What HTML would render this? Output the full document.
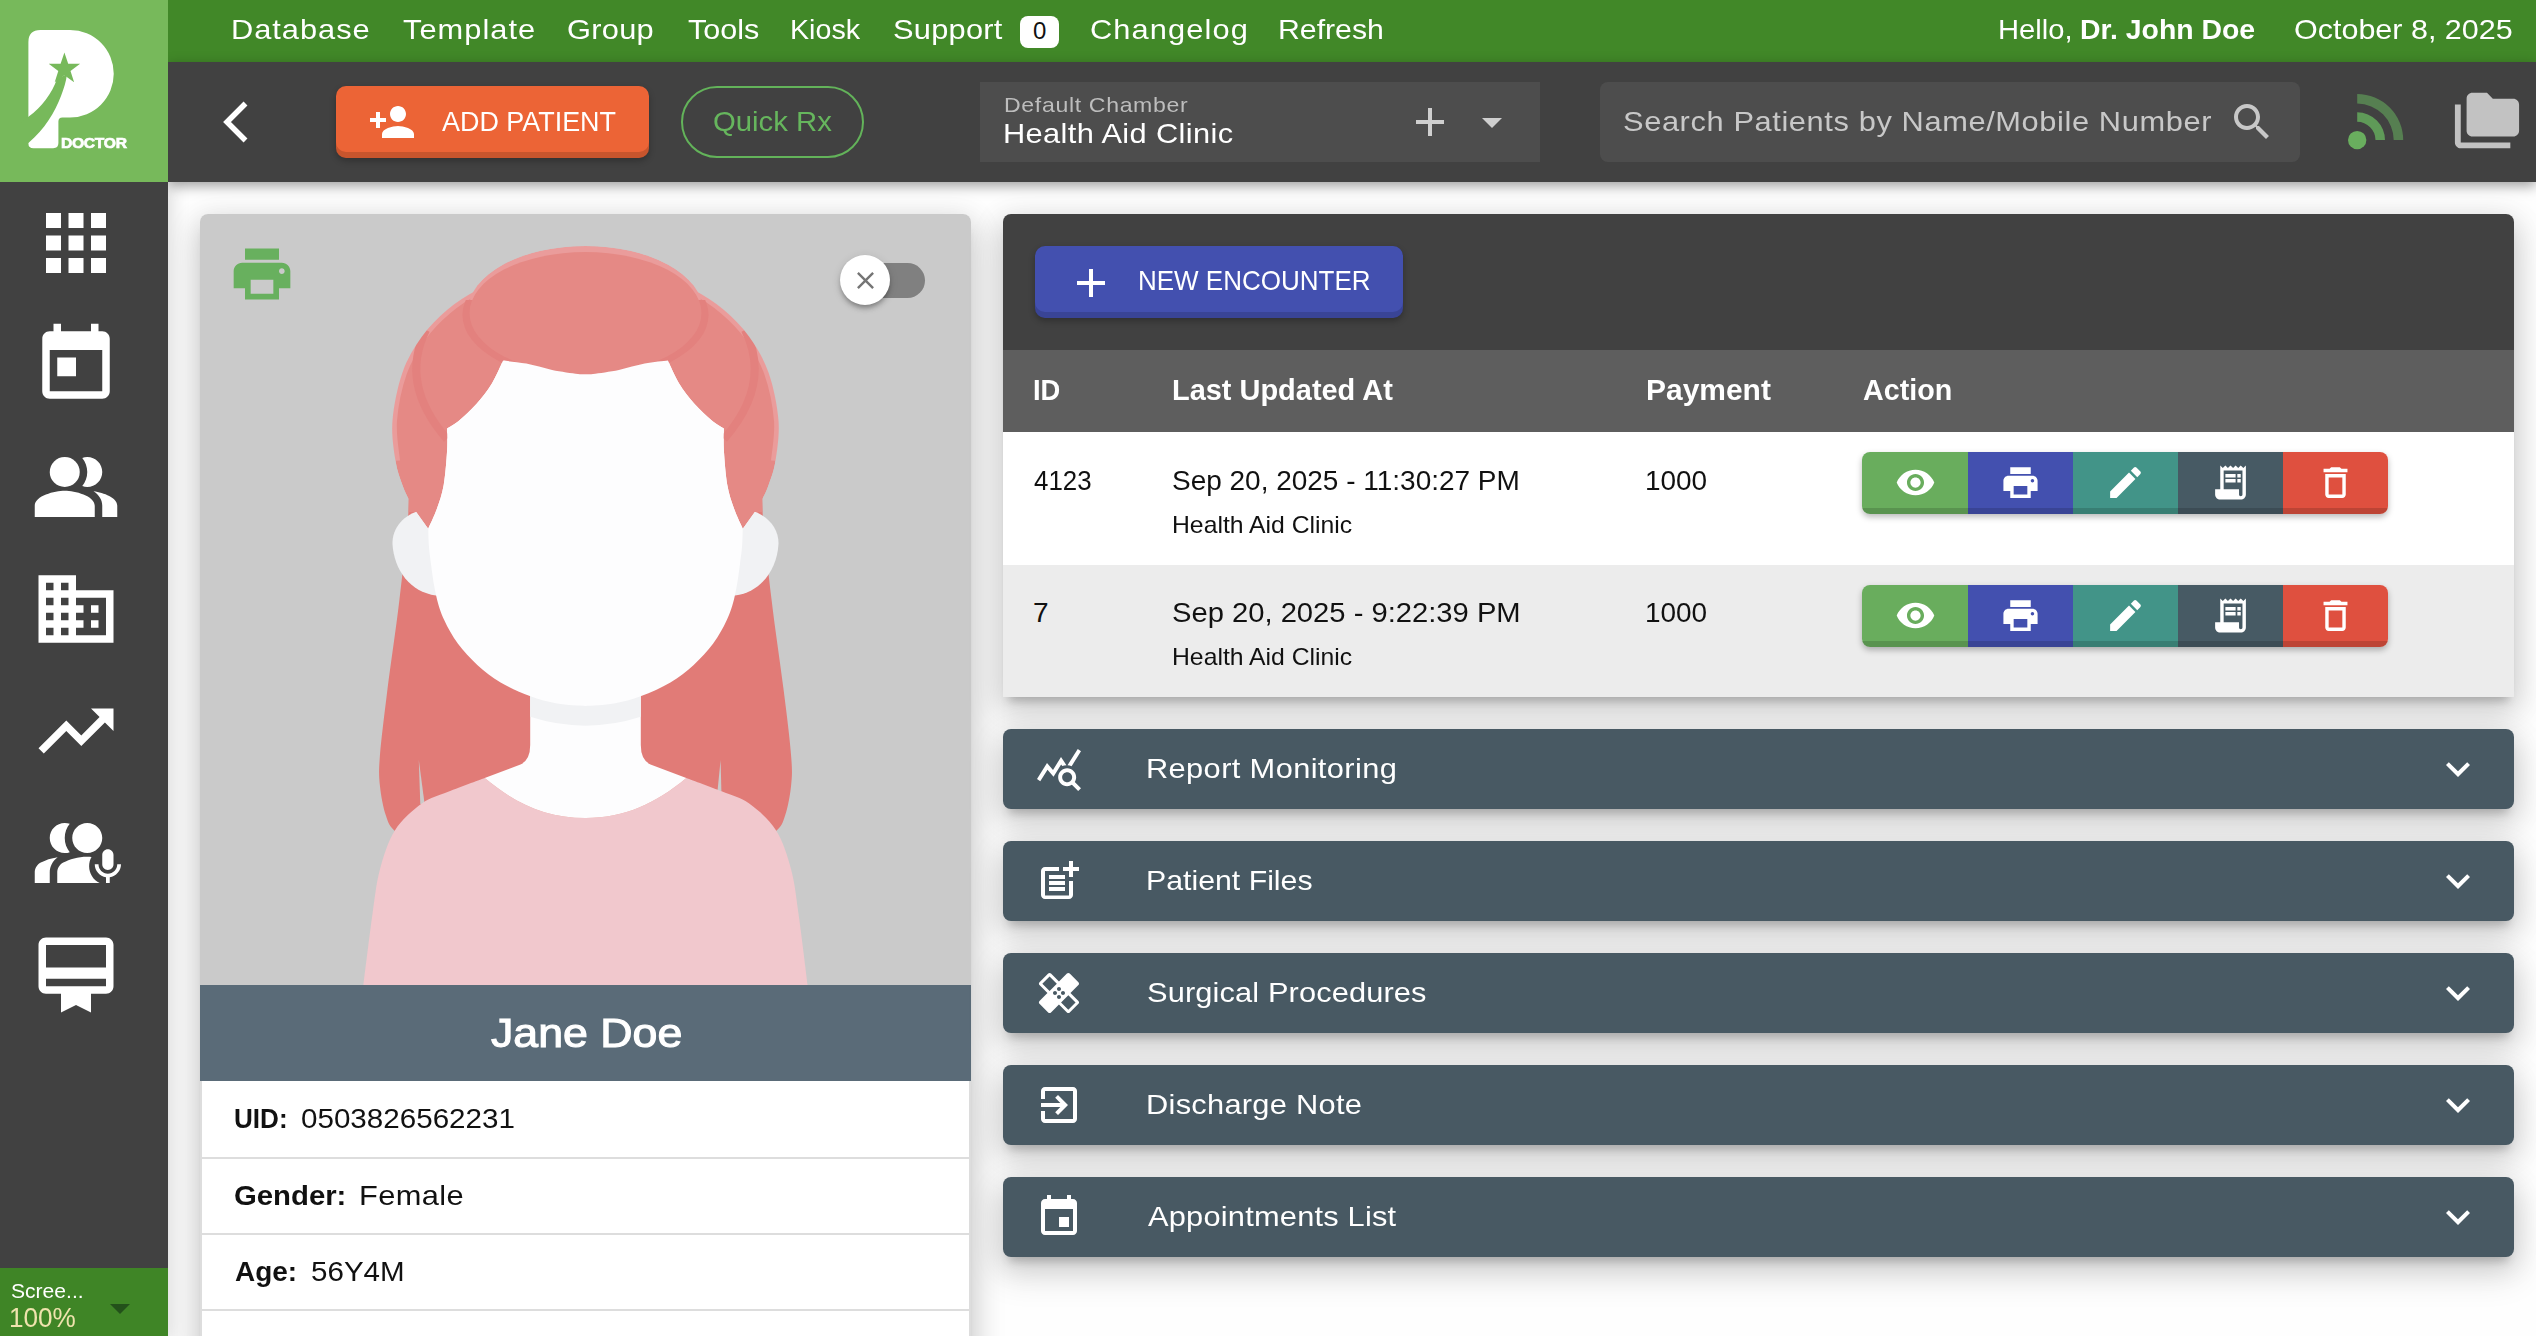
<!DOCTYPE html>
<html><head><meta charset="utf-8"><title>Patient</title>
<style>
*{box-sizing:border-box;margin:0;padding:0}
html,body{width:2536px;height:1336px;overflow:hidden;background:#fefefe;font-family:"Liberation Sans",sans-serif}
#root{position:relative;width:2536px;height:1336px;overflow:hidden}
.b{position:absolute}
.ic{position:absolute;display:block}
.t{position:absolute;white-space:nowrap;line-height:1;transform-origin:0 0}
.avatar{position:absolute;left:0;top:0;display:block}
#side{left:0;top:0;width:168px;height:1336px;background:#414141}
#sidesh{left:0;top:182px;width:168px;height:1160px;box-shadow:3px 0 18px rgba(0,0,0,.15)}
#logo{left:0;top:0;width:168px;height:182px;background:#77b95b}
#nav{left:168px;top:0;width:2368px;height:62px;background:#418828}
#bar{left:168px;top:62px;width:2368px;height:120px;background:#414141;box-shadow:0 4px 12px rgba(0,0,0,.38)}
#scr{left:0;top:1268px;width:168px;height:68px;background:#3f8526}
.btn{border-radius:10px}
.card{box-shadow:0 16px 34px 4px rgba(0,0,0,.12),0 6px 28px 4px rgba(0,0,0,.10),0 10px 10px -6px rgba(0,0,0,.2)}
.acc{left:1003px;width:1511px;height:80px;background:#485963;border-radius:8px}
</style></head>
<body>
<div id="root">
<div class="b" id="sidesh"></div>
<div class="b" id="nav"></div>
<div class="b" id="bar"></div>
<div class="b card" style="left:200px;top:214px;width:771px;height:1200px;border-radius:8px;overflow:hidden;background:#fff"><div class="b" style="left:0;top:0;width:771px;height:771px;background:#cacaca"></div><svg class="avatar" viewBox="0 0 771 771" width="771" height="771"><path d="M208.4,240.0 C208.4,249.8 209.9,274.2 208.4,298.5 C206.9,322.8 202.9,356.4 199.4,386.0 C195.9,415.6 190.7,449.9 187.4,475.8 C184.2,501.8 181.2,525.7 179.9,541.7 C178.7,557.7 178.9,561.6 179.9,571.6 C180.9,581.6 183.2,593.9 185.9,601.6 C188.6,609.3 188.7,611.6 196.0,618.0 C203.3,624.4 224.3,636.3 230.0,640.0 L541.0,640.0 C546.7,636.3 567.6,624.4 575.0,618.0 C582.4,611.6 582.4,609.3 585.1,601.6 C587.8,593.9 590.1,581.6 591.1,571.6 C592.1,561.6 592.4,557.7 591.1,541.7 C589.9,525.7 586.9,501.8 583.6,475.8 C580.4,449.9 575.1,415.6 571.6,386.0 C568.1,356.4 564.1,322.8 562.6,298.5 C561.1,274.2 562.6,249.8 562.6,240.0 Z" fill="#e17b77"/><path d="M218.8,546 L220.3,590 L224.6,590 Z" fill="#cacaca"/><path d="M520.6,546 L517.4,578 L521.4,578 Z" fill="#cacaca"/><path d="M284.7,564.1 C278.7,566.4 259.3,573.4 248.8,577.6 C238.3,581.9 230.8,583.1 221.8,589.6 C212.8,596.1 201.9,605.5 194.9,616.5 C187.9,627.5 183.7,641.5 179.9,655.5 C176.2,669.5 175.2,681.1 172.4,700.4 C169.7,719.6 164.9,759.2 163.4,771.0 L607.6,771.0 C606.1,759.2 601.4,719.6 598.6,700.4 C595.9,681.1 594.9,669.5 591.1,655.5 C587.4,641.5 583.1,627.5 576.1,616.5 C569.1,605.5 558.2,596.1 549.2,589.6 C540.2,583.1 532.7,581.9 522.2,577.6 C511.7,573.4 492.3,566.4 486.3,564.1 C455.4,589.6 425,604 385.5,604 C346,604 315.6,589.6 284.7,564.1 Z" fill="#f1c8cd"/><path d="M330.2,460 V531 Q330.2,546 320.5,550.5 L284.7,564.1 C315.6,589.6 346,604 385.5,604 C425,604 455.4,589.6 486.3,564.1 L450.5,550.5 Q440.8,546 440.8,531 V460 Z" fill="#fdfdfe"/><path d="M330.2,470 V502.8 Q385.5,520.6 440.8,502.8 V470 Z" fill="#f1f2f4"/><path d="M222,296 C204,300 192,314 192.5,330 C194,356 210,378 236,381.5 L250,381 L250,296 Z" fill="#f1f2f4"/><path d="M222,296 C204,300 192,314 192.5,330 C194,356 210,378 236,381.5 L250,381 L250,296 Z" fill="#f1f2f4" transform="translate(771.0,0) scale(-1,1)"/><path d="M300.0,100.0 C291.7,108.3 261.7,128.3 250.0,150.0 C238.3,171.7 233.6,202.6 230.0,230.0 C226.4,257.4 228.1,294.6 228.3,314.6 C228.5,334.6 229.7,338.6 231.0,350.0 C232.3,361.4 234.2,373.4 236.4,382.8 C238.6,392.2 240.6,398.3 244.2,406.1 C247.8,413.9 252.3,422.0 257.8,429.5 C263.3,437.0 270.2,444.4 277.3,450.9 C284.4,457.4 291.9,463.2 300.6,468.4 C309.4,473.6 320.4,478.5 329.8,482.0 C339.2,485.5 347.7,487.8 357.0,489.5 C366.3,491.2 380.8,491.6 385.5,492.0 C390.2,491.6 404.7,491.2 414.0,489.5 C423.3,487.8 431.8,485.5 441.2,482.0 C450.6,478.5 461.6,473.6 470.4,468.4 C479.1,463.2 486.6,457.4 493.7,450.9 C500.8,444.4 507.7,437.0 513.2,429.5 C518.7,422.0 523.2,413.9 526.8,406.1 C530.4,398.3 532.4,392.2 534.6,382.8 C536.8,373.4 538.6,361.4 540.0,350.0 C541.4,338.6 542.5,334.6 542.7,314.6 C542.9,294.6 544.6,257.4 541.0,230.0 C537.4,202.6 532.7,171.7 521.0,150.0 C509.3,128.3 479.3,108.3 471.0,100.0 Z" fill="#fdfdfe"/><clipPath id="c130"><rect x="0" y="0" width="771" height="135"/></clipPath><clipPath id="hc"><path d="M385.5,60.0 C377.9,60.0 353.4,59.0 340.0,60.0 C326.6,61.0 315.5,63.3 305.0,66.0 C294.5,68.7 286.7,71.0 277.0,76.0 C267.3,81.0 256.2,88.2 247.0,96.0 C237.8,103.8 229.2,112.3 221.8,122.8 C214.4,133.2 207.3,144.7 202.4,158.7 C197.5,172.7 193.7,191.9 192.5,206.6 C191.3,221.3 193.8,236.1 195.5,246.8 C197.2,257.5 200.2,264.6 202.4,270.9 C204.6,277.2 207.4,282.4 208.4,284.7 L208.4,298.5 L216.2,298.1 L228.2,314.8 C229.6,311.5 234.2,302.3 236.8,295.0 C239.4,287.7 242.0,280.6 243.7,270.9 C245.4,261.1 246.5,245.9 247.1,236.5 C247.7,227.1 247.1,218.2 247.1,214.5 C249.1,213.2 254.3,210.5 259.2,206.4 C264.1,202.3 270.9,196.2 276.4,190.0 C281.8,183.8 287.4,176.6 291.9,169.4 C296.3,162.2 301.2,150.4 303.1,146.6 C307.0,147.1 318.1,148.0 326.3,149.6 C334.5,151.2 343.5,154.2 352.1,155.9 C360.7,157.6 372.4,159.2 378.0,159.9 C383.6,160.6 384.2,160.2 385.5,160.3 C386.8,160.2 387.4,160.6 393.0,159.9 C398.6,159.2 410.3,157.6 418.9,155.9 C427.5,154.2 436.5,151.2 444.7,149.6 C452.9,148.0 464.0,147.1 467.9,146.6 C469.8,150.4 474.7,162.2 479.1,169.4 C483.6,176.6 489.2,183.8 494.6,190.0 C500.1,196.2 506.9,202.3 511.8,206.4 C516.7,210.5 521.9,213.2 523.9,214.5 C523.9,218.2 523.3,227.1 523.9,236.5 C524.5,245.9 525.6,261.1 527.3,270.9 C529.0,280.6 531.6,287.7 534.2,295.0 C536.8,302.3 541.4,311.5 542.8,314.8 L554.8,298.1 L562.6,298.5 L562.6,284.7 C563.6,282.4 566.5,277.2 568.6,270.9 C570.8,264.6 573.9,257.5 575.5,246.8 C577.1,236.1 579.6,221.3 578.5,206.6 C577.4,191.9 573.5,172.7 568.6,158.7 C563.7,144.7 556.6,133.2 549.2,122.8 C541.8,112.3 533.2,103.8 524.0,96.0 C514.8,88.2 503.7,81.0 494.0,76.0 C484.3,71.0 476.5,68.7 466.0,66.0 C455.5,63.3 444.4,61.0 431.0,60.0 C417.6,59.0 393.1,60.0 385.5,60.0 Z"/><ellipse cx="385.5" cy="96" rx="117" ry="64" clip-path="url(#c130)"/></clipPath><clipPath id="ctop"><rect x="0" y="0" width="771" height="100"/></clipPath><clipPath id="cbot"><rect x="0" y="86" width="771" height="100"/></clipPath><g clip-path="url(#hc)"><path d="M385.5,60.0 C377.9,60.0 353.4,59.0 340.0,60.0 C326.6,61.0 315.5,63.3 305.0,66.0 C294.5,68.7 286.7,71.0 277.0,76.0 C267.3,81.0 256.2,88.2 247.0,96.0 C237.8,103.8 229.2,112.3 221.8,122.8 C214.4,133.2 207.3,144.7 202.4,158.7 C197.5,172.7 193.7,191.9 192.5,206.6 C191.3,221.3 193.8,236.1 195.5,246.8 C197.2,257.5 200.2,264.6 202.4,270.9 C204.6,277.2 207.4,282.4 208.4,284.7 L208.4,298.5 L216.2,298.1 L228.2,314.8 C229.6,311.5 234.2,302.3 236.8,295.0 C239.4,287.7 242.0,280.6 243.7,270.9 C245.4,261.1 246.5,245.9 247.1,236.5 C247.7,227.1 247.1,218.2 247.1,214.5 C249.1,213.2 254.3,210.5 259.2,206.4 C264.1,202.3 270.9,196.2 276.4,190.0 C281.8,183.8 287.4,176.6 291.9,169.4 C296.3,162.2 301.2,150.4 303.1,146.6 C307.0,147.1 318.1,148.0 326.3,149.6 C334.5,151.2 343.5,154.2 352.1,155.9 C360.7,157.6 372.4,159.2 378.0,159.9 C383.6,160.6 384.2,160.2 385.5,160.3 C386.8,160.2 387.4,160.6 393.0,159.9 C398.6,159.2 410.3,157.6 418.9,155.9 C427.5,154.2 436.5,151.2 444.7,149.6 C452.9,148.0 464.0,147.1 467.9,146.6 C469.8,150.4 474.7,162.2 479.1,169.4 C483.6,176.6 489.2,183.8 494.6,190.0 C500.1,196.2 506.9,202.3 511.8,206.4 C516.7,210.5 521.9,213.2 523.9,214.5 C523.9,218.2 523.3,227.1 523.9,236.5 C524.5,245.9 525.6,261.1 527.3,270.9 C529.0,280.6 531.6,287.7 534.2,295.0 C536.8,302.3 541.4,311.5 542.8,314.8 L554.8,298.1 L562.6,298.5 L562.6,284.7 C563.6,282.4 566.5,277.2 568.6,270.9 C570.8,264.6 573.9,257.5 575.5,246.8 C577.1,236.1 579.6,221.3 578.5,206.6 C577.4,191.9 573.5,172.7 568.6,158.7 C563.7,144.7 556.6,133.2 549.2,122.8 C541.8,112.3 533.2,103.8 524.0,96.0 C514.8,88.2 503.7,81.0 494.0,76.0 C484.3,71.0 476.5,68.7 466.0,66.0 C455.5,63.3 444.4,61.0 431.0,60.0 C417.6,59.0 393.1,60.0 385.5,60.0 Z" fill="#e58985"/><path d="M305.0,66.0 C300.3,67.7 286.7,71.0 277.0,76.0 C267.3,81.0 256.2,88.2 247.0,96.0 C237.8,103.8 229.2,112.3 221.8,122.8 C214.4,133.2 207.3,144.7 202.4,158.7 C197.5,172.7 193.7,191.9 192.5,206.6 C191.3,221.3 195.0,240.1 195.5,246.8" fill="none" stroke="#ea9c9b" stroke-width="9"/><path d="M305.0,66.0 C300.3,67.7 286.7,71.0 277.0,76.0 C267.3,81.0 256.2,88.2 247.0,96.0 C237.8,103.8 229.2,112.3 221.8,122.8 C214.4,133.2 207.3,144.7 202.4,158.7 C197.5,172.7 193.7,191.9 192.5,206.6 C191.3,221.3 195.0,240.1 195.5,246.8" fill="none" stroke="#ea9c9b" stroke-width="9" transform="translate(771.0,0) scale(-1,1)"/><path d="M226,116 C209,150 213,186 247,225" fill="none" stroke="#e3817e" stroke-width="8"/><path d="M226,116 C209,150 213,186 247,225" fill="none" stroke="#e3817e" stroke-width="8" transform="translate(771.0,0) scale(-1,1)"/><g clip-path="url(#ctop)"><ellipse cx="385.5" cy="96" rx="117" ry="64" fill="#ea9c9b"/></g><g clip-path="url(#cbot)"><ellipse cx="385.5" cy="101" rx="123" ry="65" fill="#e3817e"/></g><ellipse cx="385.5" cy="99" rx="116" ry="61" fill="#e58985"/></g></svg><div class="b" style="left:0;top:771px;width:771px;height:96px;background:#5a6b78"></div><div class="b" style="left:0;top:867px;width:771px;height:400px;border:2px solid #ddd;border-top:0"></div><div class="b" style="left:2px;top:943px;width:767px;height:2px;background:#ddd"></div><div class="b" style="left:2px;top:1019px;width:767px;height:2px;background:#ddd"></div><div class="b" style="left:2px;top:1095px;width:767px;height:2px;background:#ddd"></div></div>
<svg class="ic" style="left:227.5px;top:240px;width:68px;height:68px" viewBox="0 0 24 24" fill="#68b05e" ><path d="M19 8H5c-1.660 0-3 1.340-3 3v6h4v4h12v-4h4v-6c0-1.660-1.340-3-3-3zm-3 11H8v-5h8v5zm3-7c-.55 0-1-.45-1-1s.45-1 1-1 1 .45 1 1-.45 1-1 1zm-1-9H6v4h12V3z"/></svg>
<div class="b" style="left:853px;top:263px;width:72px;height:35px;border-radius:18px;background:#808080"></div>
<div class="b" style="left:840px;top:255px;width:50px;height:50px;border-radius:25px;background:#fff;box-shadow:0 4px 4px -2px rgba(0,0,0,.2),0 4px 5px rgba(0,0,0,.14),0 2px 10px rgba(0,0,0,.12)"></div>
<svg class="ic" style="left:850.5px;top:265.5px;width:29px;height:29px" viewBox="0 0 24 24" fill="#757575" ><path d="M19 6.410L17.590 5 12 10.590 6.410 5 5 6.410 10.590 12 5 17.590 6.410 19 12 13.410 17.590 19 19 17.590 13.410 12z"/></svg>
<div class="b card" style="left:1003px;top:214px;width:1511px;height:483px;border-radius:8px 8px 0 0;overflow:hidden;background:#fff"><div class="b" style="left:0;top:0;width:1511px;height:136px;background:#414141"></div><div class="b" style="left:0;top:136px;width:1511px;height:82px;background:#5e5e5e"></div><div class="b" style="left:0;top:218px;width:1511px;height:133px;background:#fff"></div><div class="b" style="left:0;top:351px;width:1511px;height:132px;background:#ececec"></div></div>
<div class="b btn" style="left:1035px;top:246px;width:368px;height:72px;background:#4350af;box-shadow:inset 0 -6px 0 rgba(0,0,0,.14),0 3px 6px rgba(0,0,0,.28)"></div>
<svg class="ic" style="left:1067px;top:258.5px;width:48px;height:48px" viewBox="0 0 24 24" fill="#fff" ><path d="M19 13h-6v6h-2v-6H5v-2h6V5h2v6h6v2z"/></svg>
<div class="b" style="left:1862px;top:452px;width:526px;height:62px;border-radius:8px;overflow:hidden;box-shadow:0 3px 6px rgba(0,0,0,.28)"><div class="b" style="left:0px;top:0;width:106px;height:62px;background:#69ad5d;box-shadow:inset 0 -6px 0 rgba(0,0,0,.15)"></div><div class="b" style="left:106px;top:0;width:105px;height:62px;background:#4350af;box-shadow:inset 0 -6px 0 rgba(0,0,0,.15)"></div><div class="b" style="left:211px;top:0;width:105px;height:62px;background:#429488;box-shadow:inset 0 -6px 0 rgba(0,0,0,.15)"></div><div class="b" style="left:316px;top:0;width:105px;height:62px;background:#475a64;box-shadow:inset 0 -6px 0 rgba(0,0,0,.15)"></div><div class="b" style="left:421px;top:0;width:105px;height:62px;background:#df503f;box-shadow:inset 0 -6px 0 rgba(0,0,0,.15)"></div></div>
<svg class="ic" style="left:1894.5px;top:461.5px;width:41px;height:41px" viewBox="0 0 24 24" fill="#fff" ><path d="M12 4.500C7 4.500 2.730 7.610 1 12c1.730 4.390 6 7.500 11 7.500s9.270-3.110 11-7.500c-1.730-4.390-6-7.500-11-7.500zM12 17c-2.760 0-5-2.240-5-5s2.240-5 5-5 5 2.240 5 5-2.240 5-5 5zm0-8c-1.660 0-3 1.340-3 3s1.340 3 3 3 3-1.340 3-3-1.340-3-3-3z"/></svg>
<svg class="ic" style="left:2000.0px;top:461.5px;width:41px;height:41px" viewBox="0 0 24 24" fill="#fff" ><path d="M19 8H5c-1.660 0-3 1.340-3 3v6h4v4h12v-4h4v-6c0-1.660-1.340-3-3-3zm-3 11H8v-5h8v5zm3-7c-.55 0-1-.45-1-1s.45-1 1-1 1 .45 1 1-.45 1-1 1zm-1-9H6v4h12V3z"/></svg>
<svg class="ic" style="left:2105.0px;top:461.5px;width:41px;height:41px" viewBox="0 0 24 24" fill="#fff" ><path d="M3 17.250V21h3.750L17.810 9.940l-3.750-3.750L3 17.250zM20.710 7.040c.39-.39.39-1.020 0-1.410l-2.340-2.340c-.39-.39-1.020-.39-1.410 0l-1.830 1.830 3.750 3.750 1.830-1.830z"/></svg>
<svg class="ic" style="left:2210.0px;top:461.5px;width:41px;height:41px" viewBox="0 0 24 24" fill="#fff" ><path d="M19.500 3.500L18 2l-1.500 1.500L15 2l-1.500 1.500L12 2l-1.500 1.500L9 2 7.500 3.500 6 2v14H3v3c0 1.660 1.340 3 3 3h12c1.660 0 3-1.340 3-3V2l-1.500 1.500zM19 19c0 .55-.45 1-1 1s-1-.45-1-1v-3H8V5h11v14z"/><path d="M9 7h6v2H9zM16 7h2v2h-2zM9 10h6v2H9zM16 10h2v2h-2z"/></svg>
<svg class="ic" style="left:2315.0px;top:461.5px;width:41px;height:41px" viewBox="0 0 24 24" fill="#fff" ><path d="M6 19c0 1.100.9 2 2 2h8c1.100 0 2-.9 2-2V7H6v12zM8 9h8v10H8V9zm7.500-5l-1-1h-5l-1 1H5v2h14V4z"/></svg>
<div class="b" style="left:1862px;top:585px;width:526px;height:62px;border-radius:8px;overflow:hidden;box-shadow:0 3px 6px rgba(0,0,0,.28)"><div class="b" style="left:0px;top:0;width:106px;height:62px;background:#69ad5d;box-shadow:inset 0 -6px 0 rgba(0,0,0,.15)"></div><div class="b" style="left:106px;top:0;width:105px;height:62px;background:#4350af;box-shadow:inset 0 -6px 0 rgba(0,0,0,.15)"></div><div class="b" style="left:211px;top:0;width:105px;height:62px;background:#429488;box-shadow:inset 0 -6px 0 rgba(0,0,0,.15)"></div><div class="b" style="left:316px;top:0;width:105px;height:62px;background:#475a64;box-shadow:inset 0 -6px 0 rgba(0,0,0,.15)"></div><div class="b" style="left:421px;top:0;width:105px;height:62px;background:#df503f;box-shadow:inset 0 -6px 0 rgba(0,0,0,.15)"></div></div>
<svg class="ic" style="left:1894.5px;top:594.5px;width:41px;height:41px" viewBox="0 0 24 24" fill="#fff" ><path d="M12 4.500C7 4.500 2.730 7.610 1 12c1.730 4.390 6 7.500 11 7.500s9.270-3.110 11-7.500c-1.730-4.390-6-7.500-11-7.500zM12 17c-2.760 0-5-2.240-5-5s2.240-5 5-5 5 2.240 5 5-2.240 5-5 5zm0-8c-1.660 0-3 1.340-3 3s1.340 3 3 3 3-1.340 3-3-1.340-3-3-3z"/></svg>
<svg class="ic" style="left:2000.0px;top:594.5px;width:41px;height:41px" viewBox="0 0 24 24" fill="#fff" ><path d="M19 8H5c-1.660 0-3 1.340-3 3v6h4v4h12v-4h4v-6c0-1.660-1.340-3-3-3zm-3 11H8v-5h8v5zm3-7c-.55 0-1-.45-1-1s.45-1 1-1 1 .45 1 1-.45 1-1 1zm-1-9H6v4h12V3z"/></svg>
<svg class="ic" style="left:2105.0px;top:594.5px;width:41px;height:41px" viewBox="0 0 24 24" fill="#fff" ><path d="M3 17.250V21h3.750L17.810 9.940l-3.750-3.750L3 17.250zM20.710 7.040c.39-.39.39-1.020 0-1.410l-2.340-2.340c-.39-.39-1.020-.39-1.410 0l-1.830 1.830 3.750 3.750 1.830-1.830z"/></svg>
<svg class="ic" style="left:2210.0px;top:594.5px;width:41px;height:41px" viewBox="0 0 24 24" fill="#fff" ><path d="M19.500 3.500L18 2l-1.500 1.500L15 2l-1.500 1.500L12 2l-1.500 1.500L9 2 7.500 3.500 6 2v14H3v3c0 1.660 1.340 3 3 3h12c1.660 0 3-1.340 3-3V2l-1.500 1.500zM19 19c0 .55-.45 1-1 1s-1-.45-1-1v-3H8V5h11v14z"/><path d="M9 7h6v2H9zM16 7h2v2h-2zM9 10h6v2H9zM16 10h2v2h-2z"/></svg>
<svg class="ic" style="left:2315.0px;top:594.5px;width:41px;height:41px" viewBox="0 0 24 24" fill="#fff" ><path d="M6 19c0 1.100.9 2 2 2h8c1.100 0 2-.9 2-2V7H6v12zM8 9h8v10H8V9zm7.500-5l-1-1h-5l-1 1H5v2h14V4z"/></svg>
<div class="b acc card" style="top:729px"></div>
<svg class="ic" style="left:1035px;top:745px;width:48px;height:48px" viewBox="0 0 24 24" fill="#fff" ><path d="M19.880 18.470c.440-.700.700-1.510.700-2.390 0-2.490-2.010-4.500-4.500-4.500s-4.500 2.010-4.500 4.500 2.010 4.500 4.490 4.500c.880 0 1.700-.260 2.390-.700L21.580 23 23 21.580l-3.120-3.110zm-3.800.110c-1.380 0-2.500-1.120-2.500-2.500s1.120-2.500 2.500-2.500 2.500 1.120 2.500 2.500-1.120 2.500-2.500 2.500zm-.360-8.500c-.740.020-1.450.180-2.100.450l-.55-.83-3.800 6.180-3.010-3.520-3.630 5.810L1 17l5-8 3 3.500L13 6l2.720 4.080zm2.590.5c-.640-.280-1.330-.450-2.050-.490L21.380 2 23 3.180l-4.690 7.400z"/></svg>
<svg class="ic" style="left:2434px;top:745px;width:48px;height:48px" viewBox="0 0 24 24" fill="#fff" ><path d="M16.590 8.590L12 13.170 7.410 8.590 6 10l6 6 6-6z"/></svg>
<div class="b acc card" style="top:841px"></div>
<svg class="ic" style="left:1035px;top:857px;width:48px;height:48px" viewBox="0 0 24 24" fill="#fff" ><path d="M17 19.220H5V7h7V5H5c-1.100 0-2 .9-2 2v12c0 1.100.9 2 2 2h12c1.100 0 2-.9 2-2v-7h-2v7.220z"/><path d="M19 2h-2v3h-3c.01.010 0 2 0 2h3v2.990c.01.010 2 0 2 0V7h3V5h-3V2zM7 9h8v2H7zM7 12v2h8v-2h-3zM7 15h8v2H7z"/></svg>
<svg class="ic" style="left:2434px;top:857px;width:48px;height:48px" viewBox="0 0 24 24" fill="#fff" ><path d="M16.590 8.590L12 13.170 7.410 8.590 6 10l6 6 6-6z"/></svg>
<div class="b acc card" style="top:953px"></div>
<svg class="ic" style="left:1035px;top:969px;width:48px;height:48px" viewBox="0 0 24 24" fill="#fff" ><path d="M17.730 12.020l3.980-3.980c.39-.39.39-1.020 0-1.410l-4.340-4.340c-.39-.39-1.020-.39-1.410 0l-3.980 3.980L8 2.290C7.800 2.100 7.550 2 7.290 2c-.25 0-.51.100-.7.290L2.250 6.630c-.39.39-.39 1.020 0 1.410l3.980 3.980L2.250 16c-.39.39-.39 1.020 0 1.410l4.340 4.340c.39.39 1.020.39 1.410 0l3.980-3.980 3.980 3.980c.2.200.45.290.71.290.26 0 .51-.1.710-.29l4.340-4.340c.39-.39.39-1.020 0-1.410l-3.990-3.980zM12 9c.55 0 1 .45 1 1s-.45 1-1 1-1-.45-1-1 .45-1 1-1zm-4.710 1.960L3.660 7.340l3.630-3.630 3.620 3.620-3.620 3.630zM10 13c-.55 0-1-.45-1-1s.45-1 1-1 1 .45 1 1-.45 1-1 1zm2 2c-.55 0-1-.45-1-1s.45-1 1-1 1 .45 1 1-.45 1-1 1zm2-4c.55 0 1 .45 1 1s-.45 1-1 1-1-.45-1-1 .45-1 1-1zm2.660 9.340l-3.630-3.620 3.630-3.630 3.620 3.620-3.620 3.630z"/></svg>
<svg class="ic" style="left:2434px;top:969px;width:48px;height:48px" viewBox="0 0 24 24" fill="#fff" ><path d="M16.590 8.590L12 13.170 7.410 8.590 6 10l6 6 6-6z"/></svg>
<div class="b acc card" style="top:1065px"></div>
<svg class="ic" style="left:1035px;top:1081px;width:48px;height:48px" viewBox="0 0 24 24" fill="#fff" ><path d="M10.090 15.590L11.500 17l5-5-5-5-1.410 1.410L12.670 11H3v2h9.670l-2.580 2.590zM19 3H5c-1.110 0-2 .9-2 2v4h2V5h14v14H5v-4H3v4c0 1.100.89 2 2 2h14c1.100 0 2-.9 2-2V5c0-1.100-.9-2-2-2z"/></svg>
<svg class="ic" style="left:2434px;top:1081px;width:48px;height:48px" viewBox="0 0 24 24" fill="#fff" ><path d="M16.590 8.590L12 13.170 7.410 8.590 6 10l6 6 6-6z"/></svg>
<div class="b acc card" style="top:1177px"></div>
<svg class="ic" style="left:1035px;top:1193px;width:48px;height:48px" viewBox="0 0 24 24" fill="#fff" ><path d="M17 12h-5v5h5v-5zM16 1v2H8V1H6v2H5c-1.110 0-1.990.9-1.990 2L3 19c0 1.100.89 2 2 2h14c1.100 0 2-.9 2-2V5c0-1.100-.9-2-2-2h-1V1h-2zm3 18H5V8h14v11z"/></svg>
<svg class="ic" style="left:2434px;top:1193px;width:48px;height:48px" viewBox="0 0 24 24" fill="#fff" ><path d="M16.590 8.590L12 13.170 7.410 8.590 6 10l6 6 6-6z"/></svg>
<div class="b" id="side"></div>
<div class="b" id="logo"></div>
<svg class="ic" style="left:0;top:0;width:168px;height:182px" viewBox="0 0 168 182"><path d="M28.4,42 Q28.4,30 40.4,30 H70 A43.75,43.75 0 0 1 70,117.5 H62.4 Q58.4,117.5 58.4,121.5 V143 Q58.4,148.2 53.2,148.2 H33.5 Q28.4,148.2 28.4,143.5 Z" fill="#fff"/><path d="M57,79 C52,93 42,107 28.4,116.8 L20,123 L20,150 L29.2,142.2 C44,130 55,112 61,96 C64,88 66,82 67,74 Z" fill="#77b95b"/><polygon points="64.4,52.4 68.2,63.7 80.1,63.8 70.5,70.9 74.1,82.2 64.4,75.3 54.7,82.2 58.3,70.9 48.7,63.8 60.6,63.7" fill="#77b95b"/></svg>
<div class="t" id="doctor" style="left:61.2px;top:135.4px;font-size:15.2px;font-weight:700;color:#fff;letter-spacing:-0.3px;-webkit-text-stroke:0.7px #fff;transform:scaleX(1.03)">DOCTOR</div>
<svg class="ic" style="left:31px;top:198px;width:90px;height:90px" viewBox="0 0 24 24" fill="#fff" ><path d="M4 8h4V4H4v4zm6 12h4v-4h-4v4zm-6 0h4v-4H4v4zm0-6h4v-4H4v4zm6 0h4v-4h-4v4zm6-10v4h4V4h-4zm-6 4h4V4h-4v4zm6 6h4v-4h-4v4zm0 6h4v-4h-4v4z"/></svg>
<svg class="ic" style="left:31px;top:320px;width:90px;height:90px" viewBox="0 0 24 24" fill="#fff" ><path d="M19 3h-1V1h-2v2H8V1H6v2H5c-1.11 0-1.99.9-1.99 2L3 19c0 1.1.89 2 2 2h14c1.1 0 2-.9 2-2V5c0-1.1-.9-2-2-2zm0 16H5V8h14v11zM7 10h5v5H7z"/></svg>
<svg class="ic" style="left:31px;top:442px;width:90px;height:90px" viewBox="0 0 24 24" fill="#fff" ><path d="M16.67 13.13C18.04 14.06 19 15.32 19 17v3h4v-3c0-2.18-3.57-3.47-6.33-3.87z"/><circle cx="9" cy="8" r="4"/><path d="M15 12c2.21 0 4-1.79 4-4s-1.79-4-4-4c-.47 0-.91.1-1.33.24C14.5 5.27 15 6.58 15 8s-.5 2.73-1.33 3.76c.42.14.86.24 1.33.24zM9 13c-2.67 0-8 1.34-8 4v3h16v-3c0-2.66-5.33-4-8-4z"/></svg>
<svg class="ic" style="left:31px;top:564px;width:90px;height:90px" viewBox="0 0 24 24" fill="#fff" ><path d="M12 7V3H2v18h20V7H12zM6 19H4v-2h2v2zm0-4H4v-2h2v2zm0-4H4V9h2v2zm0-4H4V5h2v2zm4 12H8v-2h2v2zm0-4H8v-2h2v2zm0-4H8V9h2v2zm0-4H8V5h2v2zm10 12h-8v-2h2v-2h-2v-2h2v-2h-2V9h8v10zm-2-8h-2v2h2v-2zm0 4h-2v2h2v-2z"/></svg>
<svg class="ic" style="left:31px;top:686px;width:90px;height:90px" viewBox="0 0 24 24" fill="#fff" ><path d="M16 6l2.29 2.29-4.88 4.88-4-4L2 16.59 3.41 18l6-6 4 4 6.3-6.29L22 12V6z"/></svg>
<svg class="ic" style="left:31px;top:808px;width:90px;height:90px" viewBox="0 0 24 24" fill="#fff" ><path d="M20.5 16.5c-.83 0-1.5-.67-1.5-1.5v-2.5c0-.83.67-1.5 1.500-1.500s1.500.67 1.500 1.500V15c0 .83-.67 1.500-1.500 1.500zM20 20h1v-1.540c1.690-.240 3-1.700 3-3.460h-1c0 1.380-1.120 2.500-2.500 2.500S18 16.380 18 15h-1c0 1.760 1.310 3.220 3 3.460V20zM9 12c-2.210 0-4-1.790-4-4s1.790-4 4-4c.470 0 .920.080 1.340.230C9.500 5.260 9 6.570 9 8s.5 2.740 1.340 3.770c-.420.150-.870.230-1.340.230zM7.110 13.130C5.790 14.050 5 15.570 5 17.220V20H1v-2.780c0-1.120.610-2.150 1.610-2.660 1.240-.640 2.760-1.190 4.500-1.430zM11 8c0-2.210 1.790-4 4-4s4 1.790 4 4-1.790 4-4 4-4-1.790-4-4zM18.320 20c-1.670-.810-2.820-2.520-2.820-4.500 0-.890.230-1.730.640-2.450C15.770 13.020 15.390 13 15 13c-2.530 0-4.710.700-6.390 1.560-1 .510-1.610 1.540-1.610 2.660V20h11.320z"/></svg>
<svg class="ic" style="left:31px;top:930px;width:90px;height:90px" viewBox="0 0 24 24" fill="#fff" ><path d="M20 2H4c-1.11 0-2 .89-2 2v11c0 1.110.89 2 2 2h4v5l4-2 4 2v-5h4c1.110 0 2-.89 2-2V4c0-1.110-.89-2-2-2zm0 13H4v-2h16v2zm0-5H4V4h16v6z"/></svg>
<div class="b" id="scr"></div>
<svg class="ic" style="left:96px;top:1284px;width:48px;height:48px" viewBox="0 0 24 24" fill="#23511a" ><path d="M7 10l5 5 5-5z"/></svg>
<div class="b" style="left:1020px;top:16px;width:39px;height:31.5px;border-radius:8px;background:#fff"></div>
<svg class="ic" style="left:216px;top:98px;width:40px;height:48px" viewBox="0 0 40 48"><path d="M29.5,5.5 L11,24 L29.5,42.5" fill="none" stroke="#fff" stroke-width="5.5"/></svg>
<div class="b btn" style="left:336px;top:86px;width:313px;height:72px;background:#ec6436;box-shadow:inset 0 -6px 0 rgba(0,0,0,.15),0 3px 6px rgba(0,0,0,.25)"></div>
<svg class="ic" style="left:368px;top:98px;width:48px;height:48px" viewBox="0 0 24 24" fill="#fff" ><path d="M15 12c2.21 0 4-1.79 4-4s-1.79-4-4-4-4 1.79-4 4 1.79 4 4 4zm-9-2V7H4v3H1v2h3v3h2v-3h3v-2H6zm9 4c-2.67 0-8 1.34-8 4v2h16v-2c0-2.660-5.330-4-8-4z"/></svg>
<div class="b" style="left:681px;top:86px;width:183px;height:72px;border-radius:36px;border:2.5px solid #63b35a"></div>
<div class="b" style="left:980px;top:82px;width:560px;height:80px;background:#4d4d4d"></div>
<svg class="ic" style="left:1406.4px;top:98px;width:48px;height:48px" viewBox="0 0 24 24" fill="#cfcfcf" ><path d="M19 13h-6v6h-2v-6H5v-2h6V5h2v6h6v2z"/></svg>
<svg class="ic" style="left:1468px;top:98px;width:48px;height:48px" viewBox="0 0 24 24" fill="#cfcfcf" ><path d="M7 10l5 5 5-5z"/></svg>
<div class="b" style="left:1600px;top:82px;width:700px;height:80px;border-radius:8px;background:#4d4d4d"></div>
<svg class="ic" style="left:2228px;top:98px;width:48px;height:48px" viewBox="0 0 24 24" fill="#c8c8c8" ><path d="M15.500 14h-.79l-.28-.27C15.410 12.590 16 11.110 16 9.500 16 5.910 13.090 3 9.500 3S3 5.910 3 9.500 5.910 16 9.500 16c1.610 0 3.090-.59 4.230-1.570l.27.28v.79l5 4.990L20.490 19l-4.990-5zm-6 0C7.010 14 5 11.990 5 9.500S7.010 5 9.500 5 14 7.010 14 9.500 11.990 14 9.500 14z"/></svg>
<svg class="ic" style="left:0;top:0;width:2536px;height:200px" viewBox="0 0 2536 200"><path d="M2357.2,94.1 A46,46 0 0 1 2403.2,140.1 L2393.7,140.1 A36.5,36.5 0 0 0 2357.2,103.6 Z" fill="#567f51"/><path d="M2357.2,112.3 A27.8,27.8 0 0 1 2385.0,140.1 L2375.5,140.1 A18.3,18.3 0 0 0 2357.2,121.8 Z" fill="#5f9a58"/><circle cx="2357.2" cy="140.1" r="9.2" fill="#69ae5e"/></svg>
<svg class="ic" style="left:2452px;top:87px;width:70px;height:70px" viewBox="0 0 24 24" fill="#c2c2c2" ><path d="M3 6H1v13c0 1.100.9 2 2 2h17v-2H3V6z"/><path d="M21 4h-7l-2-2H7c-1.100 0-1.990.9-1.990 2L5 15c0 1.100.9 2 2 2h14c1.100 0 2-.9 2-2V6c0-1.100-.9-2-2-2z"/></svg>
<div class="t" id="t0" style="left:231.0px;top:16.3px;font-size:28px;font-weight:400;color:#fff;letter-spacing:0.88px;transform:scaleX(1.1000);">Database</div>
<div class="t" id="t1" style="left:403.0px;top:16.3px;font-size:28px;font-weight:400;color:#fff;letter-spacing:0.93px;transform:scaleX(1.1000);">Template</div>
<div class="t" id="t2" style="left:566.9px;top:16.3px;font-size:28px;font-weight:400;color:#fff;letter-spacing:0.26px;transform:scaleX(1.1000);">Group</div>
<div class="t" id="t3" style="left:687.5px;top:16.3px;font-size:28px;font-weight:400;color:#fff;letter-spacing:0.00px;transform:scaleX(1.0922);">Tools</div>
<div class="t" id="t4" style="left:790.0px;top:16.3px;font-size:28px;font-weight:400;color:#fff;letter-spacing:0.00px;transform:scaleX(1.0227);">Kiosk</div>
<div class="t" id="t5" style="left:893.4px;top:16.3px;font-size:28px;font-weight:400;color:#fff;letter-spacing:0.22px;transform:scaleX(1.1000);">Support</div>
<div class="t" id="t6" style="left:1033.0px;top:19.2px;font-size:24px;font-weight:400;color:#111;letter-spacing:0.00px;">0</div>
<div class="t" id="t7" style="left:1089.9px;top:16.3px;font-size:28px;font-weight:400;color:#fff;letter-spacing:1.00px;transform:scaleX(1.1000);">Changelog</div>
<div class="t" id="t8" style="left:1277.8px;top:16.3px;font-size:28px;font-weight:400;color:#fff;letter-spacing:0.00px;transform:scaleX(1.0797);">Refresh</div>
<div class="t" id="t9" style="left:1998.3px;top:16.3px;font-size:28px;font-weight:400;color:#fff;letter-spacing:0.00px;transform:scaleX(1.0412);">Hello,</div>
<div class="t" id="t10" style="left:2080.0px;top:16.3px;font-size:28px;font-weight:700;color:#fff;letter-spacing:0.00px;transform:scaleX(1.0139);">Dr. John Doe</div>
<div class="t" id="t11" style="left:2294.2px;top:16.3px;font-size:28px;font-weight:400;color:#fff;letter-spacing:0.00px;transform:scaleX(1.0892);">October 8, 2025</div>
<div class="t" id="t12" style="left:441.5px;top:107.5px;font-size:28px;font-weight:400;color:#fff;letter-spacing:0.00px;transform:scaleX(0.9615);">ADD PATIENT</div>
<div class="t" id="t13" style="left:713.0px;top:107.5px;font-size:28px;font-weight:400;color:#66b65d;letter-spacing:0.00px;transform:scaleX(1.0464);">Quick Rx</div>
<div class="t" id="t14" style="left:1003.9px;top:93.8px;font-size:21px;font-weight:400;color:#bdbdbd;letter-spacing:0.59px;transform:scaleX(1.1000);">Default Chamber</div>
<div class="t" id="t15" style="left:1002.8px;top:119.5px;font-size:28px;font-weight:400;color:#fff;letter-spacing:0.33px;transform:scaleX(1.1000);">Health Aid Clinic</div>
<div class="t" id="t16" style="left:1623.4px;top:107.7px;font-size:28px;font-weight:400;color:#c8c8c8;letter-spacing:0.55px;transform:scaleX(1.1000);">Search Patients by Name/Mobile Number</div>
<div class="t" id="t17" style="left:10.8px;top:1280.2px;font-size:21px;font-weight:400;color:#fff;letter-spacing:0.00px;transform:scaleX(1.0039);">Scree...</div>
<div class="t" id="t18" style="left:8.9px;top:1305.2px;font-size:27px;font-weight:400;color:#efe3ad;letter-spacing:0.00px;transform:scaleX(0.9680);">100%</div>
<div class="t" id="t19" style="left:491.2px;top:1013.3px;font-size:41px;font-weight:400;color:#fff;letter-spacing:0.00px;transform:scaleX(1.0898);-webkit-text-stroke:1.1px #fff;">Jane Doe</div>
<div class="t" id="t20" style="left:233.7px;top:1105.3px;font-size:28px;font-weight:700;color:#111;letter-spacing:0.00px;transform:scaleX(0.9314);">UID:</div>
<div class="t" id="t21" style="left:301.4px;top:1105.3px;font-size:28px;font-weight:400;color:#111;letter-spacing:0.00px;transform:scaleX(1.0569);">0503826562231</div>
<div class="t" id="t22" style="left:233.6px;top:1181.7px;font-size:28px;font-weight:700;color:#111;letter-spacing:0.00px;transform:scaleX(1.0468);">Gender:</div>
<div class="t" id="t23" style="left:358.7px;top:1181.7px;font-size:28px;font-weight:400;color:#111;letter-spacing:0.33px;transform:scaleX(1.1000);">Female</div>
<div class="t" id="t24" style="left:234.6px;top:1257.8px;font-size:28px;font-weight:700;color:#111;letter-spacing:0.00px;transform:scaleX(0.9967);">Age:</div>
<div class="t" id="t25" style="left:311.3px;top:1257.8px;font-size:28px;font-weight:400;color:#111;letter-spacing:0.00px;transform:scaleX(1.0556);">56Y4M</div>
<div class="t" id="t26" style="left:233.5px;top:1333.8px;font-size:28px;font-weight:700;color:#111;letter-spacing:0.00px;transform:scaleX(1.0606);">Mobile:</div>
<div class="t" id="t27" style="left:1138.1px;top:267.3px;font-size:28px;font-weight:400;color:#fff;letter-spacing:0.00px;transform:scaleX(0.9283);">NEW ENCOUNTER</div>
<div class="t" id="t28" style="left:1033.1px;top:375.8px;font-size:29px;font-weight:700;color:#fff;letter-spacing:0.00px;transform:scaleX(0.9425);">ID</div>
<div class="t" id="t29" style="left:1171.8px;top:375.8px;font-size:29px;font-weight:700;color:#fff;letter-spacing:0.00px;transform:scaleX(0.9978);">Last Updated At</div>
<div class="t" id="t30" style="left:1646.4px;top:375.8px;font-size:29px;font-weight:700;color:#fff;letter-spacing:0.00px;transform:scaleX(1.0330);">Payment</div>
<div class="t" id="t31" style="left:1862.5px;top:375.8px;font-size:29px;font-weight:700;color:#fff;letter-spacing:0.00px;transform:scaleX(0.9887);">Action</div>
<div class="t" id="t32" style="left:1034.0px;top:467.1px;font-size:28px;font-weight:400;color:#111;letter-spacing:0.00px;transform:scaleX(0.9236);">4123</div>
<div class="t" id="t33" style="left:1171.8px;top:467.1px;font-size:28px;font-weight:400;color:#111;letter-spacing:0.00px;transform:scaleX(0.9990);">Sep 20, 2025 - 11:30:27 PM</div>
<div class="t" id="t34" style="left:1171.8px;top:513.2px;font-size:24px;font-weight:400;color:#111;letter-spacing:0.00px;transform:scaleX(1.0310);">Health Aid Clinic</div>
<div class="t" id="t35" style="left:1645.4px;top:467.1px;font-size:28px;font-weight:400;color:#111;letter-spacing:0.00px;transform:scaleX(0.9980);">1000</div>
<div class="t" id="t36" style="left:1033.0px;top:599.3px;font-size:28px;font-weight:400;color:#111;letter-spacing:0.00px;">7</div>
<div class="t" id="t37" style="left:1171.8px;top:599.3px;font-size:28px;font-weight:400;color:#111;letter-spacing:0.00px;transform:scaleX(1.0417);">Sep 20, 2025 - 9:22:39 PM</div>
<div class="t" id="t38" style="left:1171.8px;top:645.4px;font-size:24px;font-weight:400;color:#111;letter-spacing:0.00px;transform:scaleX(1.0310);">Health Aid Clinic</div>
<div class="t" id="t39" style="left:1645.4px;top:599.3px;font-size:28px;font-weight:400;color:#111;letter-spacing:0.00px;transform:scaleX(0.9980);">1000</div>
<div class="t" id="t40" style="left:1145.8px;top:754.7px;font-size:28px;font-weight:400;color:#fff;letter-spacing:0.34px;transform:scaleX(1.1000);">Report Monitoring</div>
<div class="t" id="t41" style="left:1145.8px;top:866.7px;font-size:28px;font-weight:400;color:#fff;letter-spacing:0.00px;transform:scaleX(1.0810);">Patient Files</div>
<div class="t" id="t42" style="left:1146.9px;top:978.7px;font-size:28px;font-weight:400;color:#fff;letter-spacing:0.11px;transform:scaleX(1.1000);">Surgical Procedures</div>
<div class="t" id="t43" style="left:1145.8px;top:1090.7px;font-size:28px;font-weight:400;color:#fff;letter-spacing:0.25px;transform:scaleX(1.1000);">Discharge Note</div>
<div class="t" id="t44" style="left:1148.0px;top:1202.7px;font-size:28px;font-weight:400;color:#fff;letter-spacing:0.19px;transform:scaleX(1.1000);">Appointments List</div>
</div>
</body></html>
